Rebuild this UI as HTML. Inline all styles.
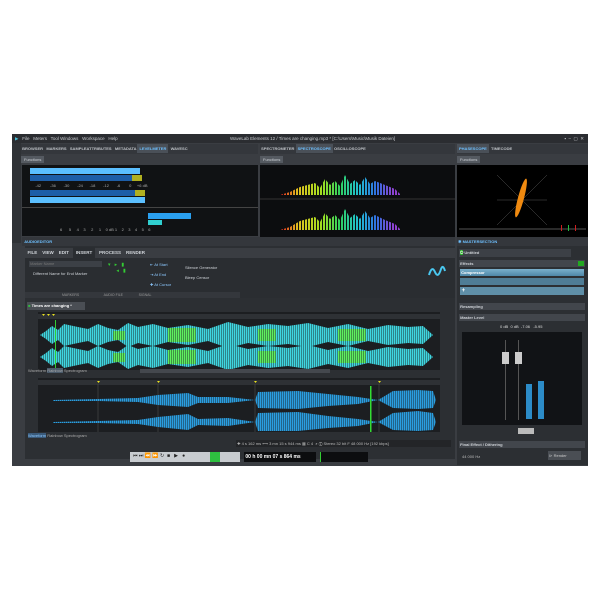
<!DOCTYPE html>
<html><head><style>
*{margin:0;padding:0;box-sizing:border-box}
body{width:600px;height:600px;background:#fff;position:relative;overflow:hidden;font-family:"Liberation Sans",sans-serif;font-size:4px;color:#cfd3d8}
.a{position:absolute}
.t{white-space:nowrap}
</style></head><body>
<div class="a" style="left:12px;top:134px;width:576px;height:332px;background:#3a3d42"></div>
<div class="a t" style="left:12px;top:134px;width:576px;height:9px;background:#2b2d31;font-size:4.5px;line-height:9px;color:#c9ccd0">
 <span style="color:#49c0d8;margin-left:3px">▶</span>&nbsp;&nbsp; File &nbsp; Meters &nbsp; Tool Windows &nbsp; Workspace &nbsp; Help
 <span class="a" style="left:218px">WaveLab Elements 12 / Times are changing.mp3 * [C:\Users\Music\Musik Dateien]</span>
 <span class="a" style="right:4px">▪ &nbsp;–&nbsp; ▢ &nbsp;✕</span>
</div>
<div class="a" style="left:12px;top:143px;width:9px;height:100px;background:#2f3236"></div>
<div class="a t" style="left:21px;top:144px;width:237px;height:10px;background:#34373c;line-height:10px;font-weight:bold;color:#bfc3c8">&nbsp;BROWSER &nbsp; MARKERS &nbsp; SAMPLEATTRIBUTES &nbsp; METADATA <span style="background:#4a5058;color:#6ec0ff;padding:2px 2px">LEVELMETER</span> &nbsp;WAVESC</div>
<div class="a t" style="left:260px;top:144px;width:195px;height:10px;background:#34373c;line-height:10px;font-weight:bold;color:#bfc3c8">&nbsp;SPECTROMETER <span style="background:#4a5058;color:#6ec0ff;padding:2px 2px">SPECTROSCOPE</span> OSCILLOSCOPE</div>
<div class="a t" style="left:457px;top:144px;width:131px;height:10px;background:#34373c;line-height:10px;font-weight:bold;color:#bfc3c8"><span style="background:#4a5058;color:#6ec0ff;padding:2px 2px">PHASESCOPE</span> &nbsp;TIMECODE</div>
<div class="a t" style="left:21px;top:155px;width:237px;height:10px;background:#3a3d42"><span style="background:#555a61;padding:1px 3px;position:relative;top:2px">Functions</span></div>
<div class="a t" style="left:260px;top:155px;width:195px;height:10px;background:#3a3d42"><span style="background:#555a61;padding:1px 3px;position:relative;top:2px">Functions</span></div>
<div class="a t" style="left:457px;top:155px;width:131px;height:10px;background:#3a3d42"><span style="background:#555a61;padding:1px 3px;position:relative;top:2px">Functions</span></div>
<div class="a" style="left:22px;top:165px;width:236px;height:71px;background:#101214"></div>
<div class="a" style="left:30px;top:168px;width:110px;height:6px;background:#5bbfff"></div>
<div class="a" style="left:30px;top:175px;width:102px;height:6px;background:#1d5ea8"></div>
<div class="a" style="left:132px;top:175px;width:10px;height:6px;background:#b0b020"></div>
<div class="a t" style="left:22px;top:183px;width:236px;height:5px;color:#aaa;font-size:4px">&nbsp;&nbsp;&nbsp;&nbsp;&nbsp;&nbsp;&nbsp;&nbsp;&nbsp;&nbsp;&nbsp;&nbsp;-42 &nbsp;&nbsp;&nbsp;&nbsp;&nbsp;&nbsp;&nbsp;-36 &nbsp;&nbsp;&nbsp;&nbsp;&nbsp;&nbsp;-30 &nbsp;&nbsp;&nbsp;&nbsp;&nbsp;&nbsp;-24 &nbsp;&nbsp;&nbsp;&nbsp;&nbsp;-18 &nbsp;&nbsp;&nbsp;&nbsp;&nbsp;&nbsp;-12 &nbsp;&nbsp;&nbsp;&nbsp;&nbsp;&nbsp;-6 &nbsp;&nbsp;&nbsp;&nbsp;&nbsp;&nbsp;&nbsp;0 &nbsp;&nbsp;&nbsp;&nbsp;+6 dB</div>
<div class="a" style="left:30px;top:190px;width:105px;height:6px;background:#1d5ea8"></div>
<div class="a" style="left:135px;top:190px;width:10px;height:6px;background:#b0b020"></div>
<div class="a" style="left:30px;top:197px;width:115px;height:6px;background:#5bbfff"></div>
<div class="a" style="left:22px;top:207px;width:236px;height:1px;background:#444"></div>
<div class="a" style="left:148px;top:213px;width:43px;height:6px;background:#2aa0f0"></div>
<div class="a" style="left:148px;top:220px;width:14px;height:5px;background:#30d0d0"></div>
<div class="a t" style="left:60px;top:227px;color:#aaa">6 &nbsp;&nbsp;&nbsp;&nbsp;&nbsp;5 &nbsp;&nbsp;&nbsp;&nbsp;4 &nbsp;&nbsp;&nbsp;3 &nbsp;&nbsp;&nbsp;&nbsp;2 &nbsp;&nbsp;&nbsp;&nbsp;1 &nbsp;&nbsp;&nbsp;0 dB 1 &nbsp;&nbsp;&nbsp;2 &nbsp;&nbsp;&nbsp;3 &nbsp;&nbsp;&nbsp;4 &nbsp;&nbsp;&nbsp;5 &nbsp;&nbsp;&nbsp;6</div>
<div class="a" style="left:260px;top:165px;width:195px;height:72px;background:#0c0d0f"></div>
<svg class="a" style="left:260px;top:165px" width="195" height="72">
<defs><linearGradient id="sp" x1="0" x2="1"><stop offset="0" stop-color="#e02020"/><stop offset=".15" stop-color="#e0c020"/><stop offset=".35" stop-color="#a0e020"/><stop offset=".5" stop-color="#30d060"/><stop offset=".65" stop-color="#20c0d0"/><stop offset=".8" stop-color="#3070e0"/><stop offset=".95" stop-color="#9040d0"/></linearGradient>
<pattern id="bars" width="3" height="72" patternUnits="userSpaceOnUse"><rect width="2" height="72" fill="#fff"/></pattern>
<mask id="bm"><rect width="195" height="72" fill="url(#bars)"/></mask></defs>
<g mask="url(#bm)">
<path d="M20 30 L30 27 L40 22 L55 18 L60 23 L65 14 L70 20 L75 16 L80 21 L85 10 L90 19 L95 15 L100 20 L105 12 L110 19 L115 16 L125 20 L135 24 L140 29 L140 30 Z" fill="url(#sp)"/>
<path d="M20 65 L30 62 L40 56 L55 52 L60 57 L65 48 L70 54 L75 50 L80 55 L85 44 L90 53 L95 49 L100 54 L105 46 L110 53 L115 50 L125 55 L135 59 L140 64 L140 65 Z" fill="url(#sp)"/>
</g>
<line x1="0" y1="34" x2="195" y2="34" stroke="#333"/>
</svg>
<div class="a" style="left:457px;top:165px;width:131px;height:72px;background:#000"></div>
<svg class="a" style="left:457px;top:165px" width="131" height="72">
<line x1="40" y1="10" x2="90" y2="60" stroke="#555" stroke-width=".5"/><line x1="90" y1="10" x2="40" y2="60" stroke="#555" stroke-width=".5"/><line x1="40" y1="35" x2="90" y2="35" stroke="#555" stroke-width=".5"/>
<ellipse cx="64" cy="33" rx="3" ry="20" transform="rotate(15 64 33)" fill="#f08a10"/>
<line x1="2" y1="64" x2="129" y2="64" stroke="#555"/>
<rect x="104" y="60" width="1" height="6" fill="#d02020"/><rect x="111" y="60" width="1" height="6" fill="#20c040"/><rect x="118" y="60" width="1" height="6" fill="#d02020"/>
</svg>
<div class="a t" style="left:22px;top:237px;width:433px;height:9px;background:#34373c;line-height:9px;font-weight:bold;color:#6ec0ff">&nbsp;&nbsp;AUDIOEDITOR</div>
<div class="a" style="left:25px;top:246px;width:430px;height:213px;background:#2c2f33"></div>
<div class="a t" style="left:25px;top:248px;width:430px;height:10px;background:#3a3d42;line-height:10px;font-weight:bold;font-size:4.5px">&nbsp; FILE &nbsp;&nbsp; VIEW &nbsp;&nbsp; EDIT &nbsp; <span style="background:#2a2d31;padding:3px 3px">INSERT</span> &nbsp; PROCESS &nbsp;&nbsp; RENDER</div>
<div class="a" style="left:25px;top:258px;width:430px;height:40px;background:#2a2d31"></div>
<div class="a" style="left:29px;top:261px;width:73px;height:6px;background:#3c4046;color:#777">&nbsp;Marker Name</div>
<div class="a t" style="left:33px;top:271px">Different Name for End Marker</div>
<div class="a t" style="left:108px;top:262px;color:#3c3;font-size:5px">▾ &nbsp;&nbsp;▸ &nbsp;&nbsp;▮<br>&nbsp;&nbsp;&nbsp;&nbsp;&nbsp;&nbsp;◂ &nbsp;&nbsp;▮</div>
<div class="a t" style="left:150px;top:262px;color:#8cc8ff">⇤ At Start<br><br>⇥ At End<br><br>✚ At Cursor</div>
<div class="a t" style="left:185px;top:265px">Silence Generator<br><br>Bleep Censor</div>
<div class="a" style="left:25px;top:292px;width:215px;height:6px;background:#34373c;color:#999;font-size:3.5px;line-height:6px">&nbsp;&nbsp;&nbsp;&nbsp;&nbsp;&nbsp;&nbsp;&nbsp;&nbsp;&nbsp;&nbsp;&nbsp;&nbsp;&nbsp;&nbsp;&nbsp;&nbsp;&nbsp;&nbsp;&nbsp;&nbsp;&nbsp;&nbsp;&nbsp;&nbsp;&nbsp;&nbsp;&nbsp;&nbsp;&nbsp;&nbsp;&nbsp;&nbsp;&nbsp;&nbsp;&nbsp;&nbsp;&nbsp;MARKERS&nbsp;&nbsp;&nbsp;&nbsp;&nbsp;&nbsp;&nbsp;&nbsp;&nbsp;&nbsp;&nbsp;&nbsp;&nbsp;&nbsp;&nbsp;&nbsp;&nbsp;&nbsp;&nbsp;&nbsp;&nbsp;&nbsp;&nbsp;&nbsp;&nbsp;AUDIO FILE&nbsp;&nbsp;&nbsp;&nbsp;&nbsp;&nbsp;&nbsp;&nbsp;&nbsp;&nbsp;&nbsp;&nbsp;&nbsp;&nbsp;&nbsp;&nbsp;SIGNAL</div>
<svg class="a" style="left:427px;top:265px" width="20" height="14"><path d="M2 10 Q5 0 8 7 Q11 14 14 4 Q16 -1 18 6" stroke="#4ac8f0" stroke-width="2" fill="none"/></svg>
<div class="a t" style="left:27px;top:302px;width:58px;height:8px;background:#4a4e54;line-height:8px;font-weight:bold;color:#fff">&nbsp;<span style="color:#30c040">■</span> Times are changing *</div>
<div class="a" style="left:38px;top:312px;width:402px;height:58px;background:#1c1e21"></div>
<div class="a" style="left:38px;top:314px;width:402px;height:5px;background:#2e3135"></div>
<svg class="a" style="left:38px;top:312px" width="402" height="58">
<defs><pattern id="st" width="2" height="58" patternUnits="userSpaceOnUse"><rect width="1.3" height="58" fill="#fff"/><rect x="1.3" width=".7" height="58" fill="#888"/></pattern>
<mask id="sm"><rect width="402" height="58" fill="url(#st)"/></mask></defs>
<g mask="url(#sm)">
<path d="M2 23 L8 19 L14 14 L20 18 L26 12 L40 15 L50 17 L60 12 L70 16 L80 18 L90 11 L100 15 L115 12 L130 16 L150 13 L170 17 L190 10 L210 15 L230 12 L250 14 L270 11 L290 16 L310 12 L330 17 L350 13 L370 15 L385 14 L395 23 L385 32 L370 31 L350 33 L330 29 L310 34 L290 30 L270 35 L250 32 L230 34 L210 31 L190 36 L170 29 L150 33 L130 30 L115 34 L100 31 L90 35 L80 28 L70 30 L60 34 L50 29 L40 31 L26 34 L20 28 L14 32 L8 27 Z" fill="#3fd6e0"/>
<path d="M2 45 L8 41 L14 36 L20 40 L26 34 L40 37 L50 39 L60 34 L70 38 L80 40 L90 33 L100 37 L115 34 L130 38 L150 35 L170 39 L190 32 L210 37 L230 34 L250 36 L270 33 L290 38 L310 34 L330 39 L350 35 L370 37 L385 36 L395 45 L385 54 L370 53 L350 55 L330 51 L310 56 L290 52 L270 57 L250 54 L230 56 L210 53 L190 58 L170 51 L150 55 L130 52 L115 56 L100 53 L90 57 L80 50 L70 52 L60 56 L50 51 L40 53 L26 56 L20 50 L14 54 L8 49 Z" fill="#3fd6e0"/>
<g fill="#5ef060"><rect x="130" y="16" width="28" height="14"/><rect x="130" y="38" width="28" height="14"/><rect x="220" y="17" width="18" height="12"/><rect x="220" y="39" width="18" height="12"/><rect x="300" y="17" width="28" height="12"/><rect x="300" y="39" width="28" height="12"/><rect x="75" y="19" width="12" height="9"/><rect x="75" y="41" width="12" height="9"/></g>
</g>
<rect x="17" y="8" width="1" height="50" fill="#3c3"/>
<g fill="#e8e020"><path d="M4 2h3l-1.5 2z"/><path d="M9 2h3l-1.5 2z"/><path d="M14 2h3l-1.5 2z"/></g>
</svg>
<div class="a t" style="left:28px;top:368px;width:412px;height:6px;color:#aaa">Waveform <span style="background:#4a5a6a">Rainbow</span> Spectrogram</div>
<div class="a" style="left:140px;top:369px;width:190px;height:4px;background:#44484e"></div>
<div class="a" style="left:38px;top:378px;width:402px;height:54px;background:#1c1e21"></div>
<div class="a" style="left:38px;top:380px;width:402px;height:5px;background:#2e3135"></div>
<svg class="a" style="left:38px;top:378px" width="402" height="54">
<g stroke="#555" stroke-width=".5"><line x1="60" y1="6" x2="60" y2="54"/><line x1="120" y1="6" x2="120" y2="54"/><line x1="217" y1="6" x2="217" y2="54"/><line x1="341" y1="6" x2="341" y2="54"/></g>
<g mask="url(#sm)">
<path d="M15 22 L60 21 L100 20 L120 17 L150 15 L160 19 L190 19 L217 22 L220 14 L260 13 L290 16 L320 19 L340 22 L355 13 L380 12 L395 13 L398 22 L395 30 L380 31 L355 30 L340 22 L320 26 L290 28 L260 31 L220 30 L217 22 L190 25 L160 25 L150 29 L120 27 L100 24 L60 23 L15 23 Z" fill="#2a9ee0"/>
<path d="M15 44 L60 43 L100 42 L120 39 L150 36 L160 41 L190 40 L217 44 L220 35 L260 34 L290 38 L320 41 L340 44 L355 35 L380 33 L395 35 L398 44 L395 52 L380 53 L355 52 L340 44 L320 48 L290 50 L260 53 L220 53 L217 44 L190 48 L160 47 L150 52 L120 49 L100 46 L60 45 L15 45 Z" fill="#2a9ee0"/>
</g>
<rect x="332" y="8" width="1.5" height="46" fill="#3d3"/>
<g fill="#e8e020"><path d="M59 3h3l-1.5 2z"/><path d="M119 3h3l-1.5 2z"/><path d="M216 3h3l-1.5 2z"/><path d="M340 3h3l-1.5 2z"/></g>
</svg>
<div class="a t" style="left:28px;top:433px;width:412px;height:6px;color:#aaa"><span style="background:#3a5a7a;color:#8cc8ff">Waveform</span> Rainbow Spectrogram</div>
<div class="a t" style="left:236px;top:440px;width:215px;height:7px;background:#232528;color:#bbb;line-height:7px">&nbsp;✚ 4 s 162 ms ⟷ 3 mn 15 s 944 ms ▦ C 4 &nbsp;⌕ ⓘ Stereo 32 bit F 48 000 Hz [192 kbps]</div>
<div class="a" style="left:130px;top:452px;width:110px;height:10px;background:#c8ccd0"></div>
<div class="a" style="left:210px;top:452px;width:10px;height:10px;background:#2ec040"></div>
<div class="a t" style="left:133px;top:453px;color:#222;font-size:5px">⏮ ⏭ ⏪ ⏩ ↻ &nbsp;■ &nbsp;&nbsp;▶ &nbsp;&nbsp;●</div>
<div class="a t" style="left:244px;top:452px;width:72px;height:10px;background:#0c0d0f;color:#fff;font-weight:bold;font-size:5px;line-height:10px">&nbsp;00 h 00 mn 07 s 864 ms</div>
<div class="a" style="left:320px;top:452px;width:48px;height:10px;background:#0c0d0f;border-left:1px solid #3c3"></div>
<div class="a t" style="left:457px;top:237px;width:131px;height:9px;background:#34373c;line-height:9px;font-weight:bold;color:#6ec0ff">&nbsp;✱ MASTERSECTION</div>
<div class="a" style="left:457px;top:246px;width:131px;height:219px;background:#2c2f33"></div>
<div class="a t" style="left:459px;top:249px;width:112px;height:8px;background:#3c4046;line-height:8px;font-weight:bold">&nbsp;<span style="background:#2a2;color:#fff">⏻</span> Untitled</div>
<div class="a t" style="left:459px;top:260px;width:126px;height:7px;background:#42464c;line-height:7px;font-weight:bold">&nbsp;Effects</div>
<div class="a" style="left:578px;top:261px;width:6px;height:5px;background:#2a2"></div>
<div class="a t" style="left:460px;top:269px;width:124px;height:7px;background:linear-gradient(#7ab0cc,#4f88a8);line-height:7px;color:#fff;font-weight:bold">&nbsp;Compressor</div>
<div class="a" style="left:460px;top:278px;width:124px;height:7px;background:#4f7d96"></div>
<div class="a t" style="left:460px;top:287px;width:124px;height:8px;background:#5f8fa8;line-height:8px;color:#fff;font-weight:bold;font-size:6px">&nbsp;+</div>
<div class="a t" style="left:459px;top:303px;width:126px;height:7px;background:#42464c;line-height:7px;font-weight:bold">&nbsp;Resampling</div>
<div class="a t" style="left:459px;top:314px;width:126px;height:7px;background:#42464c;line-height:7px;font-weight:bold">&nbsp;Master Level</div>
<div class="a t" style="left:500px;top:324px;color:#ddd">0 dB &nbsp;0 dB &nbsp;-7.06 &nbsp;&nbsp;-5.95</div>
<div class="a" style="left:462px;top:332px;width:120px;height:93px;background:#111316"></div>
<div class="a" style="left:505px;top:340px;width:1px;height:80px;background:#555"></div>
<div class="a" style="left:518px;top:340px;width:1px;height:80px;background:#555"></div>
<div class="a" style="left:502px;top:352px;width:7px;height:12px;background:#ccc"></div>
<div class="a" style="left:515px;top:352px;width:7px;height:12px;background:#ccc"></div>
<div class="a" style="left:526px;top:384px;width:6px;height:35px;background:#2c8cc8"></div>
<div class="a" style="left:538px;top:381px;width:6px;height:38px;background:#2c8cc8"></div>
<div class="a" style="left:518px;top:428px;width:16px;height:6px;background:#bbb"></div>
<div class="a t" style="left:459px;top:441px;width:126px;height:7px;background:#42464c;line-height:7px;font-weight:bold">&nbsp;Final Effect / Dithering</div>
<div class="a t" style="left:462px;top:454px;color:#bbb">44 000 Hz</div>
<div class="a t" style="left:548px;top:451px;width:33px;height:9px;background:#4a4e54;line-height:9px;color:#ccc">&nbsp;⊳ Render</div>
</body></html>
